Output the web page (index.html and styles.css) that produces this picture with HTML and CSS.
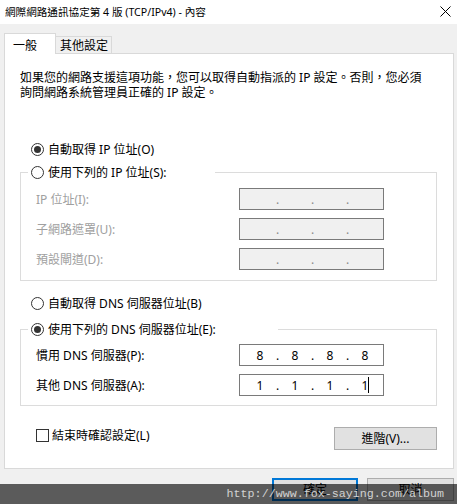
FILE: index.html
```html
<!DOCTYPE html>
<html lang="zh-Hant">
<head>
<meta charset="utf-8">
<title>TCP/IPv4</title>
<link rel="stylesheet" href="styles.css">
</head>
<body>
<div class="titlebar">
  <span class="title">網際網路通訊協定第 4 版 (TCP/IPv4) - 內容</span>
  <svg class="close" width="11" height="11" viewBox="0 0 11 11"><path d="M0.5 0.5 L10.5 10.5 M10.5 0.5 L0.5 10.5" stroke="#000" stroke-width="1" fill="none"/></svg>
</div>
<div class="tabs">
  <div class="tab active">一般</div>
  <div class="tab other">其他設定</div>
</div>
<div class="panel">
  <p class="intro">如果您的網路支援這項功能，您可以取得自動指派的 IP 設定。否則，您必須<br>詢問網路系統管理員正確的 IP 設定。</p>

  <div class="radio-row"><span class="radio checked"></span><span>自動取得 IP 位址(O)</span></div>

  <fieldset class="group group-ip">
    <legend class="legend legend-ip"><span class="radio"></span><span>使用下列的 IP 位址(S):</span></legend>
    <div class="field disabled">
      <span class="label">IP 位址(I):</span>
      <div class="ip off"><span class="seg"></span><span class="dot">.</span><span class="seg"></span><span class="dot">.</span><span class="seg"></span><span class="dot">.</span><span class="seg"></span></div>
    </div>
    <div class="field disabled">
      <span class="label">子網路遮罩(U):</span>
      <div class="ip off"><span class="seg"></span><span class="dot">.</span><span class="seg"></span><span class="dot">.</span><span class="seg"></span><span class="dot">.</span><span class="seg"></span></div>
    </div>
    <div class="field disabled">
      <span class="label">預設閘道(D):</span>
      <div class="ip off"><span class="seg"></span><span class="dot">.</span><span class="seg"></span><span class="dot">.</span><span class="seg"></span><span class="dot">.</span><span class="seg"></span></div>
    </div>
  </fieldset>

  <div class="radio-row radio-dns"><span class="radio"></span><span>自動取得 DNS 伺服器位址(B)</span></div>

  <fieldset class="group group-dns">
    <legend class="legend legend-dns"><span class="radio checked"></span><span>使用下列的 DNS 伺服器位址(E):</span></legend>
    <div class="field">
      <span class="label">慣用 DNS 伺服器(P):</span>
      <div class="ip"><span class="seg">8</span><span class="dot">.</span><span class="seg">8</span><span class="dot">.</span><span class="seg">8</span><span class="dot">.</span><span class="seg">8</span></div>
    </div>
    <div class="field">
      <span class="label">其他 DNS 伺服器(A):</span>
      <div class="ip"><span class="seg">1</span><span class="dot">.</span><span class="seg">1</span><span class="dot">.</span><span class="seg">1</span><span class="dot">.</span><span class="seg last">1<span class="caret"></span></span></div>
    </div>
  </fieldset>

  <div class="actions">
    <label class="check"><span class="box"></span><span>結束時確認設定(L)</span></label>
    <button class="btn advanced" type="button">進階(V)...</button>
  </div>
</div>
<div class="footer">
  <button class="btn ok" type="button">確定</button>
  <button class="btn cancel" type="button">取消</button>
</div>
<div class="watermark">http://www.fox-saying.com/album</div>
</body>
</html>
```
FILE: styles.css
```css
* { box-sizing: border-box; }
html, body { margin: 0; padding: 0; }
body {
  width: 457px;
  height: 504px;
  overflow: hidden;
  position: relative;
  background: #f0f0f0;
  color: #000;
  font-family: "Noto Sans", "Noto Sans CJK TC", sans-serif;
  font-size: 12px;
  line-height: 15px;
}

.titlebar {
  height: 24px;
  background: #fff;
  display: flex;
  align-items: center;
  justify-content: space-between;
  padding: 0 6px 0 5px;
}
.title { white-space: nowrap; font-size: 10.6px; }
.close { display: block; margin-top: -1px; }

.tabs {
  position: relative;
  z-index: 1;
  display: flex;
  align-items: flex-end;
  height: 20px;
  margin: 9px 0 0 4px;
}
.tab { white-space: nowrap; }
.tab.active {
  width: 52px;
  height: 21px;
  margin-bottom: -1px;
  padding: 4px 0 0 8px;
  background: #fff;
  border: 1px solid #d9d9d9;
  border-bottom: none;
}
.tab.other {
  width: 56px;
  height: 17px;
  padding: 1px 0 0 4px;
  background: #f0f0f0;
  border: 1px solid #d9d9d9;
  border-left: none;
  border-bottom: none;
}

.panel {
  height: 416px;
  margin: 0 3px 0 4px;
  background: #fff;
  border: 1px solid #d9d9d9;
  display: flex;
  flex-direction: column;
}

.intro {
  margin: 16px 0 0 15px;
  white-space: nowrap;
}

.radio-row {
  display: flex;
  align-items: center;
  gap: 4px;
  height: 21px;
  margin: 39px 0 0 26px;
  white-space: nowrap;
}
.radio-row.radio-dns { margin-top: 12px; }

.radio {
  flex: none;
  width: 13px;
  height: 13px;
  border: 1px solid #333;
  border-radius: 50%;
  display: flex;
  align-items: center;
  justify-content: center;
  background: #fff;
}
.radio.checked::after {
  content: "";
  width: 7px;
  height: 7px;
  border-radius: 50%;
  background: #333;
}

.group {
  margin: 2px 16px 0 15px;
  padding: 1px 15px 6px 7px;
  border: 1px solid #dcdcdc;
  min-width: 0;
}
.group-dns { margin-top: 5px; padding: 0 15px 5px 7px; }

.legend {
  display: flex;
  align-items: center;
  gap: 4px;
  height: 21px;
  padding: 0 0 0 3px;
  white-space: nowrap;
  background: #fff;
}
.legend-ip { width: 187px; }
.legend-dns { width: 250px; }

.field {
  display: flex;
  align-items: center;
  height: 30px;
}
.label {
  width: 211px;
  padding-left: 8px;
  white-space: nowrap;
}
.field.disabled .label { color: #a0a0a0; }

.ip {
  width: 145px;
  height: 22px;
  border: 1px solid #7a7a7a;
  background: #fff;
  display: flex;
  align-items: center;
  padding-left: 8px;
}
.ip.off { background: #f0f0f0; }
.seg { width: 24px; text-align: center; position: relative; }
.dot { width: 11px; text-align: center; }
.ip.off .dot { color: #8a8a8a; }
.caret {
  position: absolute;
  left: 15px;
  top: -1px;
  width: 1px;
  height: 16px;
  background: #000;
}

.actions {
  display: flex;
  justify-content: space-between;
  height: 23px;
  margin: 21px 16px 0 31px;
}
.check {
  align-self: flex-start;
  margin-top: 1px;
  display: flex;
  align-items: center;
  gap: 3px;
  height: 15px;
  white-space: nowrap;
}
.box {
  flex: none;
  width: 13px;
  height: 13px;
  border: 1px solid #333;
  background: #fff;
}

.btn {
  font: inherit;
  color: #000;
  background: #e1e1e1;
  border: 1px solid #adadad;
  height: 23px;
  padding: 0;
  margin: 0;
  text-align: center;
  white-space: nowrap;
}
.btn.advanced { width: 103px; }

.footer {
  display: flex;
  justify-content: flex-end;
  gap: 9px;
  margin: 9px 3px 0 0;
}
.btn.ok { width: 86px; border: 2px solid #0078d7; }
.btn.cancel { width: 87px; }

.watermark {
  position: absolute;
  left: 0;
  right: 0;
  top: 484px;
  height: 20px;
  background: rgba(0, 0, 0, 0.62);
  color: #d2d2d2;
  font-family: "Liberation Mono", monospace;
  font-size: 11.7px;
  line-height: 20px;
  text-align: right;
  padding-right: 13px;
  white-space: nowrap;
}
```
